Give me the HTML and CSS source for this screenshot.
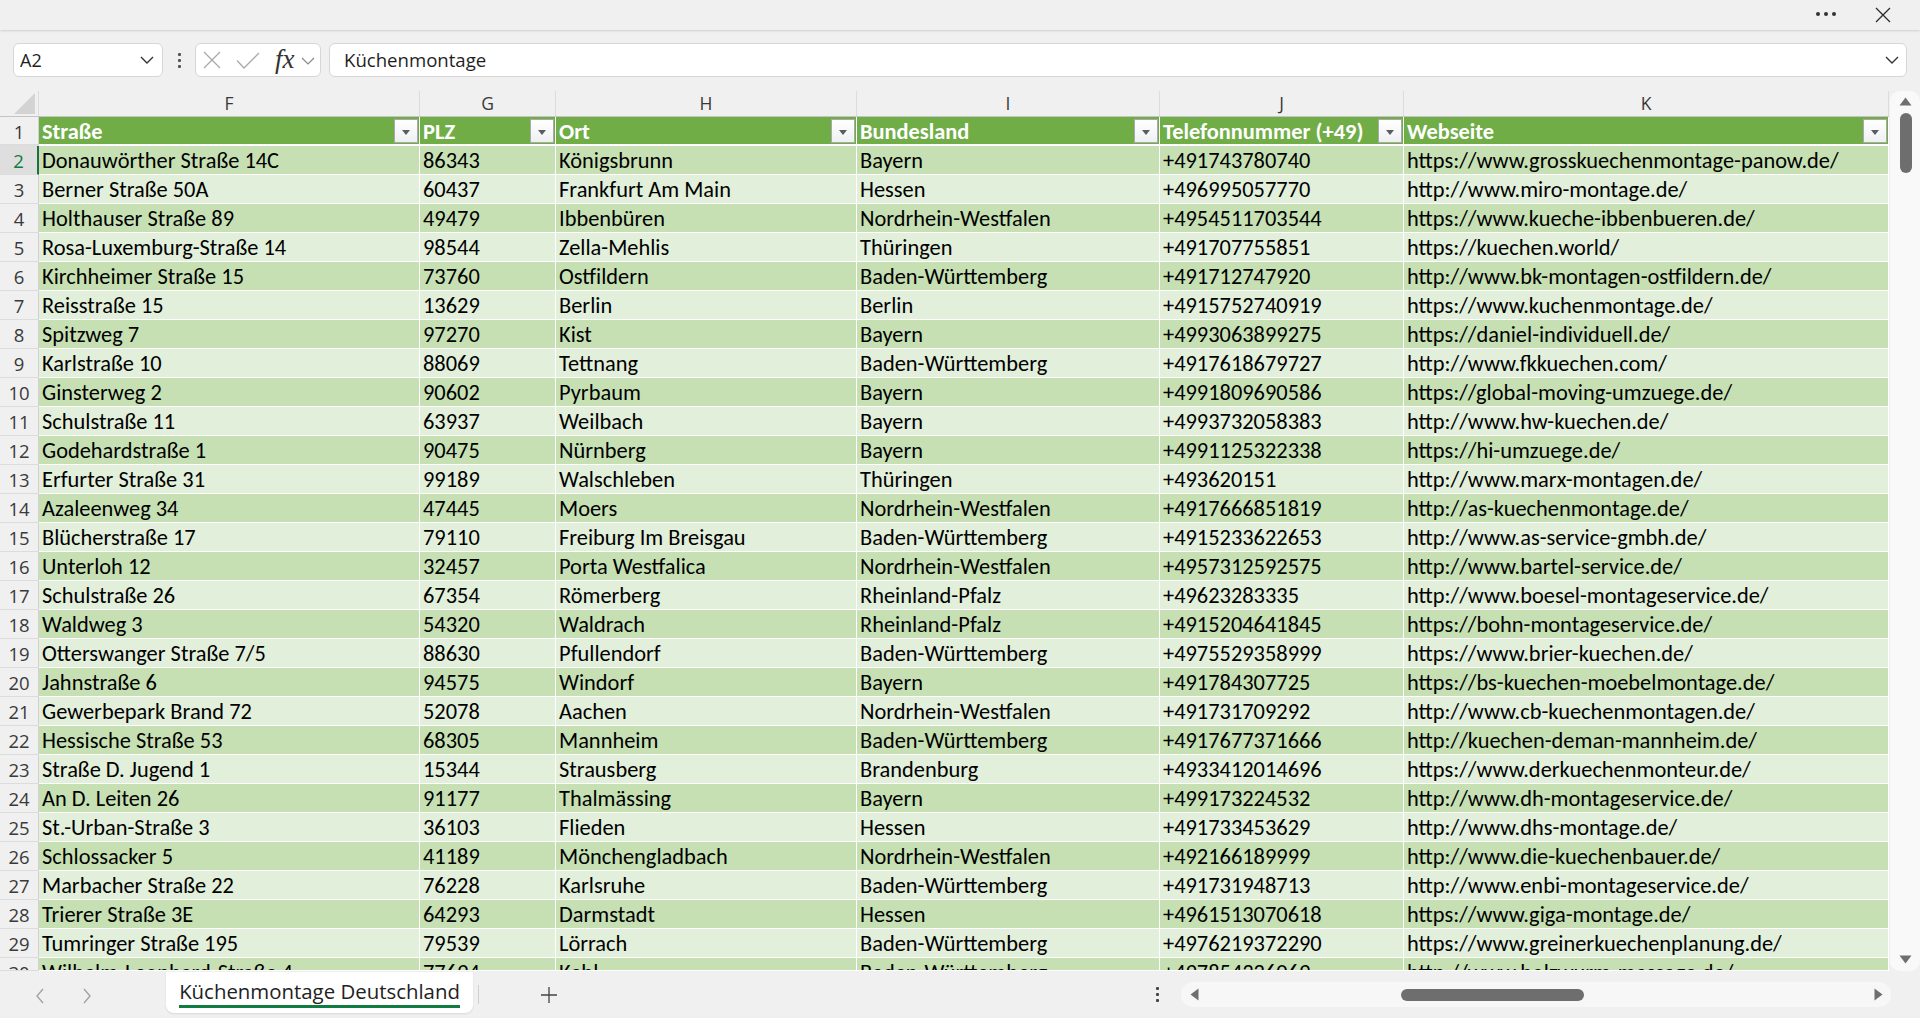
FILE: index.html
```html
<!DOCTYPE html>
<html lang="de">
<head>
<meta charset="utf-8">
<title>Küchenmontage Deutschland</title>
<link rel="stylesheet" href="styles.css">
</head>
<body>
<div class="app">
  <header class="titlebar">
    <svg class="t-more" width="22" height="6" viewBox="0 0 22 6"><circle cx="3" cy="3" r="2" fill="#333"/><circle cx="11" cy="3" r="2" fill="#333"/><circle cx="19" cy="3" r="2" fill="#333"/></svg>
    <svg class="t-close" width="16" height="16" viewBox="0 0 16 16"><path d="M1 1L15 15M15 1L1 15" stroke="#2b2b2b" stroke-width="1.3" fill="none"/></svg>
  </header>

  <div class="formulabar">
    <div class="namebox">
      <span class="nb-text">A2</span>
      <svg width="14" height="8" viewBox="0 0 14 8"><path d="M1 1l6 6 6-6" fill="none" stroke="#333" stroke-width="1.4"/></svg>
    </div>
    <div class="vdots"><i></i><i></i><i></i></div>
    <div class="fxbox">
      <svg class="fx-x" width="18" height="18" viewBox="0 0 18 18"><path d="M1 1L17 17M17 1L1 17" stroke="#a9a9a9" stroke-width="1.3" fill="none"/></svg>
      <svg class="fx-ok" width="24" height="17" viewBox="0 0 24 17"><path d="M1 8.5l7 7.5L23 1" stroke="#a9a9a9" stroke-width="1.3" fill="none"/></svg>
      <span class="fx-label">fx</span>
      <svg class="fx-chev" width="14" height="8" viewBox="0 0 14 8"><path d="M1 1l6 6 6-6" fill="none" stroke="#8a8a8a" stroke-width="1.2"/></svg>
    </div>
    <div class="finput">
      <span class="fi-text">Küchenmontage</span>
      <svg width="14" height="8" viewBox="0 0 14 8"><path d="M1 1l6 6 6-6" fill="none" stroke="#333" stroke-width="1.4"/></svg>
    </div>
  </div>

  <main class="sheet">
    <div class="grid">
      <div class="r colhead">
        <div class="corner"><span class="tri"></span></div>
        <div class="ch">F</div><div class="ch">G</div><div class="ch">H</div><div class="ch">I</div><div class="ch">J</div><div class="ch">K</div>
      </div>
      <div class="r hdr">
        <div class="rn">1</div>
        <div class="hc"><span>Straße</span><b class="flt"></b></div>
        <div class="hc"><span>PLZ</span><b class="flt"></b></div>
        <div class="hc"><span>Ort</span><b class="flt"></b></div>
        <div class="hc"><span>Bundesland</span><b class="flt"></b></div>
        <div class="hc"><span>Telefonnummer (+49)</span><b class="flt"></b></div>
        <div class="hc"><span>Webseite</span><b class="flt"></b></div>
      </div>
      <div class="r d"><div class="rn act">2</div><div>Donauwörther Straße 14C</div><div>86343</div><div>Königsbrunn</div><div>Bayern</div><div>+491743780740</div><div>https://www.grosskuechenmontage-panow.de/</div></div>
      <div class="r l"><div class="rn">3</div><div>Berner Straße 50A</div><div>60437</div><div>Frankfurt Am Main</div><div>Hessen</div><div>+496995057770</div><div>http://www.miro-montage.de/</div></div>
      <div class="r d"><div class="rn">4</div><div>Holthauser Straße 89</div><div>49479</div><div>Ibbenbüren</div><div>Nordrhein-Westfalen</div><div>+4954511703544</div><div>https://www.kueche-ibbenbueren.de/</div></div>
      <div class="r l"><div class="rn">5</div><div>Rosa-Luxemburg-Straße 14</div><div>98544</div><div>Zella-Mehlis</div><div>Thüringen</div><div>+491707755851</div><div>https://kuechen.world/</div></div>
      <div class="r d"><div class="rn">6</div><div>Kirchheimer Straße 15</div><div>73760</div><div>Ostfildern</div><div>Baden-Württemberg</div><div>+491712747920</div><div>http://www.bk-montagen-ostfildern.de/</div></div>
      <div class="r l"><div class="rn">7</div><div>Reisstraße 15</div><div>13629</div><div>Berlin</div><div>Berlin</div><div>+4915752740919</div><div>https://www.kuchenmontage.de/</div></div>
      <div class="r d"><div class="rn">8</div><div>Spitzweg 7</div><div>97270</div><div>Kist</div><div>Bayern</div><div>+4993063899275</div><div>https://daniel-individuell.de/</div></div>
      <div class="r l"><div class="rn">9</div><div>Karlstraße 10</div><div>88069</div><div>Tettnang</div><div>Baden-Württemberg</div><div>+4917618679727</div><div>http://www.fkkuechen.com/</div></div>
      <div class="r d"><div class="rn">10</div><div>Ginsterweg 2</div><div>90602</div><div>Pyrbaum</div><div>Bayern</div><div>+4991809690586</div><div>https://global-moving-umzuege.de/</div></div>
      <div class="r l"><div class="rn">11</div><div>Schulstraße 11</div><div>63937</div><div>Weilbach</div><div>Bayern</div><div>+4993732058383</div><div>http://www.hw-kuechen.de/</div></div>
      <div class="r d"><div class="rn">12</div><div>Godehardstraße 1</div><div>90475</div><div>Nürnberg</div><div>Bayern</div><div>+4991125322338</div><div>https://hi-umzuege.de/</div></div>
      <div class="r l"><div class="rn">13</div><div>Erfurter Straße 31</div><div>99189</div><div>Walschleben</div><div>Thüringen</div><div>+493620151</div><div>http://www.marx-montagen.de/</div></div>
      <div class="r d"><div class="rn">14</div><div>Azaleenweg 34</div><div>47445</div><div>Moers</div><div>Nordrhein-Westfalen</div><div>+4917666851819</div><div>http://as-kuechenmontage.de/</div></div>
      <div class="r l"><div class="rn">15</div><div>Blücherstraße 17</div><div>79110</div><div>Freiburg Im Breisgau</div><div>Baden-Württemberg</div><div>+4915233622653</div><div>http://www.as-service-gmbh.de/</div></div>
      <div class="r d"><div class="rn">16</div><div>Unterloh 12</div><div>32457</div><div>Porta Westfalica</div><div>Nordrhein-Westfalen</div><div>+4957312592575</div><div>http://www.bartel-service.de/</div></div>
      <div class="r l"><div class="rn">17</div><div>Schulstraße 26</div><div>67354</div><div>Römerberg</div><div>Rheinland-Pfalz</div><div>+49623283335</div><div>http://www.boesel-montageservice.de/</div></div>
      <div class="r d"><div class="rn">18</div><div>Waldweg 3</div><div>54320</div><div>Waldrach</div><div>Rheinland-Pfalz</div><div>+4915204641845</div><div>https://bohn-montageservice.de/</div></div>
      <div class="r l"><div class="rn">19</div><div>Otterswanger Straße 7/5</div><div>88630</div><div>Pfullendorf</div><div>Baden-Württemberg</div><div>+4975529358999</div><div>https://www.brier-kuechen.de/</div></div>
      <div class="r d"><div class="rn">20</div><div>Jahnstraße 6</div><div>94575</div><div>Windorf</div><div>Bayern</div><div>+491784307725</div><div>https://bs-kuechen-moebelmontage.de/</div></div>
      <div class="r l"><div class="rn">21</div><div>Gewerbepark Brand 72</div><div>52078</div><div>Aachen</div><div>Nordrhein-Westfalen</div><div>+491731709292</div><div>http://www.cb-kuechenmontagen.de/</div></div>
      <div class="r d"><div class="rn">22</div><div>Hessische Straße 53</div><div>68305</div><div>Mannheim</div><div>Baden-Württemberg</div><div>+4917677371666</div><div>http://kuechen-deman-mannheim.de/</div></div>
      <div class="r l"><div class="rn">23</div><div>Straße D. Jugend 1</div><div>15344</div><div>Strausberg</div><div>Brandenburg</div><div>+4933412014696</div><div>https://www.derkuechenmonteur.de/</div></div>
      <div class="r d"><div class="rn">24</div><div>An D. Leiten 26</div><div>91177</div><div>Thalmässing</div><div>Bayern</div><div>+499173224532</div><div>http://www.dh-montageservice.de/</div></div>
      <div class="r l"><div class="rn">25</div><div>St.-Urban-Straße 3</div><div>36103</div><div>Flieden</div><div>Hessen</div><div>+491733453629</div><div>http://www.dhs-montage.de/</div></div>
      <div class="r d"><div class="rn">26</div><div>Schlossacker 5</div><div>41189</div><div>Mönchengladbach</div><div>Nordrhein-Westfalen</div><div>+492166189999</div><div>http://www.die-kuechenbauer.de/</div></div>
      <div class="r l"><div class="rn">27</div><div>Marbacher Straße 22</div><div>76228</div><div>Karlsruhe</div><div>Baden-Württemberg</div><div>+491731948713</div><div>http://www.enbi-montageservice.de/</div></div>
      <div class="r d"><div class="rn">28</div><div>Trierer Straße 3E</div><div>64293</div><div>Darmstadt</div><div>Hessen</div><div>+4961513070618</div><div>https://www.giga-montage.de/</div></div>
      <div class="r l"><div class="rn">29</div><div>Tumringer Straße 195</div><div>79539</div><div>Lörrach</div><div>Baden-Württemberg</div><div>+4976219372290</div><div>https://www.greinerkuechenplanung.de/</div></div>
      <div class="r d last"><div class="rn">30</div><div>Wilhelm-Leonhard-Straße 4</div><div>77694</div><div>Kehl</div><div>Baden-Württemberg</div><div>+497854326069</div><div>http://www.holzwurm-massage.de/</div></div>
    </div>
    <div class="vscroll">
      <div class="vtrack">
        <svg class="arr-up" width="13" height="9" viewBox="0 0 13 9"><path d="M6.5 0.5L12.5 8.5H0.5Z" fill="#6f6f6f"/></svg>
        <div class="vthumb"></div>
        <svg class="arr-down" width="13" height="9" viewBox="0 0 13 9"><path d="M0.5 0.5H12.5L6.5 8.5Z" fill="#6f6f6f"/></svg>
      </div>
    </div>
  </main>

  <footer class="tabbar">
    <svg class="nav nav-prev" width="10" height="16" viewBox="0 0 10 16"><path d="M8 1L2 8l6 7" fill="none" stroke="#a3a3a3" stroke-width="1.4"/></svg>
    <svg class="nav nav-next" width="10" height="16" viewBox="0 0 10 16"><path d="M2 1l6 7-6 7" fill="none" stroke="#a3a3a3" stroke-width="1.4"/></svg>
    <div class="tab"><span class="tab-text">Küchenmontage Deutschland</span></div>
    <span class="tab-sep"></span>
    <svg class="plus" width="18" height="18" viewBox="0 0 18 18"><path d="M9 1v16M1 9h16" stroke="#444" stroke-width="1.3"/></svg>
    <div class="tab-right">
      <div class="vdots small"><i></i><i></i><i></i></div>
      <div class="htrack">
        <svg class="arr-left" width="9" height="13" viewBox="0 0 9 13"><path d="M8.5 0.5V12.5L0.5 6.5Z" fill="#6f6f6f"/></svg>
        <div class="hthumb"></div>
        <svg class="arr-right" width="9" height="13" viewBox="0 0 9 13"><path d="M0.5 0.5V12.5L8.5 6.5Z" fill="#6f6f6f"/></svg>
      </div>
    </div>
  </footer>
</div>
</body>
</html>
```

FILE: styles.css
```css
* { box-sizing: border-box; }
html, body { margin: 0; padding: 0; }
body {
  width: 1920px;
  height: 1018px;
  overflow: hidden;
  background: #f0f0f0;
  font-family: "Open Sans", "Noto Sans", "Liberation Sans", sans-serif;
  color: #222;
}
.app { display: flex; flex-direction: column; height: 1018px; }

/* title bar */
.titlebar {
  height: 30px;
  flex: none;
  display: flex;
  justify-content: flex-end;
  align-items: center;
  background: #f0f0f0;
  box-shadow: 0 1px 2px rgba(0,0,0,0.14);
  position: relative;
  z-index: 2;
}
.t-more { margin-right: 38px; margin-top: -2px; }
.t-close { margin-right: 29px; margin-top: -1px; }

/* formula bar */
.formulabar {
  height: 61px;
  flex: none;
  display: flex;
  align-items: flex-start;
  padding: 13px 13px 0 13px;
}
.namebox, .fxbox, .finput {
  height: 34px;
  background: #fff;
  border: 1px solid #d6d6d6;
  border-radius: 6px;
  display: flex;
  align-items: center;
}
.namebox {
  width: 150px;
  justify-content: space-between;
  padding: 0 8px 0 6px;
}
.nb-text { font-size: 18px; color: #1f1f1f; }
.vdots {
  width: 32px;
  height: 34px;
  display: flex;
  flex-direction: column;
  align-items: center;
  justify-content: center;
  gap: 3px;
}
.vdots i { display: block; width: 3px; height: 3px; background: #555; border-radius: 1px; }
.fxbox {
  width: 126px;
  padding-left: 7px;
}
.fx-ok { margin-left: 15px; }
.fx-label {
  font-family: "Liberation Serif", "DejaVu Serif", serif;
  font-style: italic;
  font-size: 27px;
  color: #333;
  margin-left: 15px;
  line-height: 30px;
  margin-top: -2px;
}
.fx-chev { margin-left: 6px; margin-top: 2px; }
.finput {
  flex: 1;
  margin-left: 8px;
  justify-content: space-between;
  padding: 0 7px 0 14px;
}
.fi-text { font-size: 18.6px; color: #1f1f1f; margin-top: -1px; }

/* sheet */
.sheet {
  height: 880px;
  flex: none;
  display: flex;
  overflow: hidden;
}
.grid {
  width: 1889px;
  height: 880px;
  flex: none;
  overflow: hidden;
  font-family: "Carlito", "Lato", sans-serif;
  font-size: 22.4px;
  color: #000;
}
.r {
  display: grid;
  grid-template-columns: 39px 381px 136px 301px 303px 244px 485px;
}
.colhead {
  height: 26px;
  border-bottom: 1px solid #c4c4c4;
  font-family: "Open Sans", "Noto Sans", sans-serif;
  font-size: 17.5px;
  color: #383838;
}
.colhead .ch {
  text-align: center;
  line-height: 24px;
  border-right: 1px solid #dcdcdc;
}
.corner {
  display: flex;
  align-items: flex-end;
  justify-content: flex-end;
  padding: 0 3px 2px 0;
  border-right: 1px solid #dcdcdc;
}
.tri {
  width: 21px;
  height: 21px;
  background: #d3d3d3;
  clip-path: polygon(100% 0, 100% 100%, 0 100%);
}
.rn {
  font-family: "Open Sans", "Noto Sans", sans-serif;
  font-size: 18.5px;
  color: #3a3a3a;
  text-align: center;
  background: #f0f0f0;
  border-right: 1px solid #d2d2d2;
  border-bottom: 1px solid #dcdcdc;
  overflow: hidden;
}
.rn.act {
  background: #dedede;
  color: #107c41;
  border-right: 2px solid #1d7044;
}
.hdr {
  height: 29px;
}
.hdr .rn { line-height: 30px; border-bottom: 2px solid #dcdcdc; }
.hc {
  background: #70ad47;
  color: #fff;
  font-weight: bold;
  display: flex;
  justify-content: space-between;
  align-items: flex-start;
  padding-left: 3px;
  border-right: 1px solid #fff;
  border-bottom: 2px solid #fff;
  line-height: 29px;
  overflow: hidden;
}
.flt {
  width: 24px;
  height: 24px;
  margin: 2px 1px 0 0;
  border: 1px solid #a9a9a9;
  background: linear-gradient(#ffffff, #eef0f3);
  position: relative;
  flex: none;
}
.flt::after {
  content: "";
  position: absolute;
  left: 7px;
  top: 10px;
  border-left: 4.5px solid transparent;
  border-right: 4.5px solid transparent;
  border-top: 5px solid #5c5c5c;
}
.d, .l { height: 29px; }
.d > div:not(.rn), .l > div:not(.rn) {
  padding-left: 3px;
  line-height: 30px;
  white-space: nowrap;
  overflow: hidden;
  border-right: 1px solid #fff;
  border-bottom: 1px solid #fff;
}
.d > div:not(.rn) { background: #c6e0b4; }
.l > div:not(.rn) { background: #e2efda; }
.d .rn, .l .rn { line-height: 30px; }
.r.last { height: 13px; overflow: hidden; }
.r.last > div { height: 13px; overflow: hidden; }

/* vertical scrollbar */
.vscroll {
  width: 31px;
  flex: none;
  padding-left: 1px;
}
.vtrack {
  height: 880px;
  background: #f9f9f9;
  border-radius: 10px;
  display: flex;
  flex-direction: column;
  align-items: center;
  padding-top: 6px;
}
.arr-up { margin-left: 1px; }
.vthumb {
  width: 12px;
  height: 60px;
  margin-top: 7px;
  margin-left: 1px;
  border-radius: 6px;
  background: #6e6e6e;
}
.arr-down { margin-top: auto; margin-bottom: 7px; margin-left: 1px; }

/* tab bar */
.tabbar {
  height: 47px;
  flex: none;
  display: flex;
  align-items: center;
  background: #f0f0f0;
}
.nav-prev { margin-left: 35px; margin-top: 2px; }
.nav-next { margin-left: 37px; margin-top: 2px; }
.tab {
  margin-left: 74px;
  width: 307px;
  height: 41px;
  align-self: flex-start;
  margin-top: 1px;
  background: #fff;
  border-radius: 0 0 8px 8px;
  box-shadow: 0 1px 2px rgba(0,0,0,0.10);
  display: flex;
  justify-content: center;
}
.tab-text {
  font-size: 20.4px;
  color: #222;
  line-height: 30px;
  height: 34px;
  padding-top: 2px;
  border-bottom: 3px solid #107c41;
  margin-top: 2px;
}
.tab-sep {
  width: 1px;
  height: 19px;
  background: #d0d0d0;
  margin-left: 5px;
}
.plus { margin-left: 61px; }
.tab-right {
  margin-left: auto;
  display: flex;
  align-items: center;
  margin-right: 29px;
}
.vdots.small { width: 10px; height: 20px; gap: 3px; }
.vdots.small i { background: #444; }
.htrack {
  margin-left: 19px;
  width: 710px;
  height: 25px;
  background: #f7f7f7;
  border-radius: 12px;
  display: flex;
  align-items: center;
  padding: 0 8px 0 9px;
}
.hthumb {
  width: 183px;
  height: 12px;
  border-radius: 6px;
  background: #6e6e6e;
  margin-left: 202px;
}
.arr-right { margin-left: auto; }
```
